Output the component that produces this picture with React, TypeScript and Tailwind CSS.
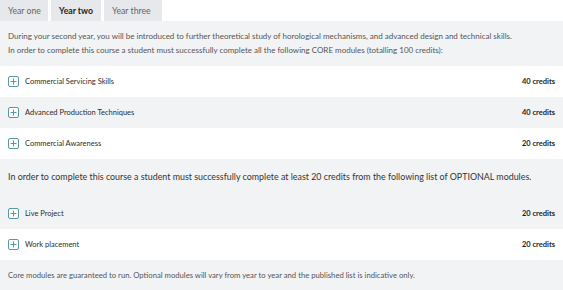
import React from 'react';

type Module = { name: string; credits: number };

const core: Module[] = [
  { name: 'Commercial Servicing Skills', credits: 40 },
  { name: 'Advanced Production Techniques', credits: 40 },
  { name: 'Commercial Awareness', credits: 20 },
];

const optional: Module[] = [
  { name: 'Live Project', credits: 20 },
  { name: 'Work placement', credits: 20 },
];

function PlusBox() {
  return (
    <svg width="11" height="11" viewBox="0 0 11 11" className="shrink-0">
      <rect x="0.5" y="0.5" width="10" height="10" rx="1.5" fill="white" stroke="#5a98a6" />
      <path d="M5.5 2.5v6M2.5 5.5h6" stroke="#5a98a6" strokeWidth="1" />
    </svg>
  );
}

function ModuleRow(props: { item: Module; shaded: boolean }) {
  return (
    <div
      className={
        'flex h-[31px] items-center justify-between px-[8px] ' +
        (props.shaded ? 'bg-[#f2f3f5]' : 'bg-white')
      }
    >
      <div className="flex items-center gap-[6px]">
        <PlusBox />
        <span className="text-[7.5px] text-[#2d2d2d]">{props.item.name}</span>
      </div>
      <span className="text-[7.5px] font-bold text-[#1e1e1e]">{props.item.credits} credits</span>
    </div>
  );
}

const tabs = [
  { label: 'Year one', width: 'w-[48px]' },
  { label: 'Year two', width: 'w-[50px]' },
  { label: 'Year three', width: 'w-[58px]' },
];

export default function App() {
  return (
    <div
      className="h-[290px] w-[563px] overflow-hidden bg-white"
      style={{ fontFamily: 'Lato, "Open Sans", sans-serif' }}
    >
      <div className="flex h-[21px] gap-[3px]">
        {tabs.map((t, i) => (
          <div
            key={t.label}
            className={
              'flex items-center bg-[#e7e8eb] pl-[8px] text-[8.7px] ' +
              t.width +
              (i === 1 ? ' font-bold text-[#222]' : ' text-[#666]')
            }
          >
            {t.label}
          </div>
        ))}
      </div>

      <div className="bg-[#f2f3f5]">
        <div className="whitespace-nowrap px-[8px] pt-[8px] pb-[9px] text-[8px] leading-[14px] text-[#555]">
          <p>
            During your second year, you will be introduced to further theoretical study of horological
            mechanisms, and advanced design and technical skills.
          </p>
          <p>
            In order to complete this course a student must successfully complete all the following CORE
            modules (totalling 100 credits):
          </p>
        </div>

        {core.map((m, i) => (
          <ModuleRow key={m.name} item={m} shaded={i % 2 === 1} />
        ))}

        <div className="flex h-[39px] items-center whitespace-nowrap px-[8px] pb-[3px] text-[8.9px] text-[#333]">
          In order to complete this course a student must successfully complete at least 20 credits from the
          following list of OPTIONAL modules.
        </div>

        {optional.map((m, i) => (
          <ModuleRow key={m.name} item={m} shaded={i % 2 === 0} />
        ))}

        <div className="flex h-[31px] items-center whitespace-nowrap px-[8px] text-[7.7px] text-[#555]">
          Core modules are guaranteed to run. Optional modules will vary from year to year and the published
          list is indicative only.
        </div>
      </div>
    </div>
  );
}
